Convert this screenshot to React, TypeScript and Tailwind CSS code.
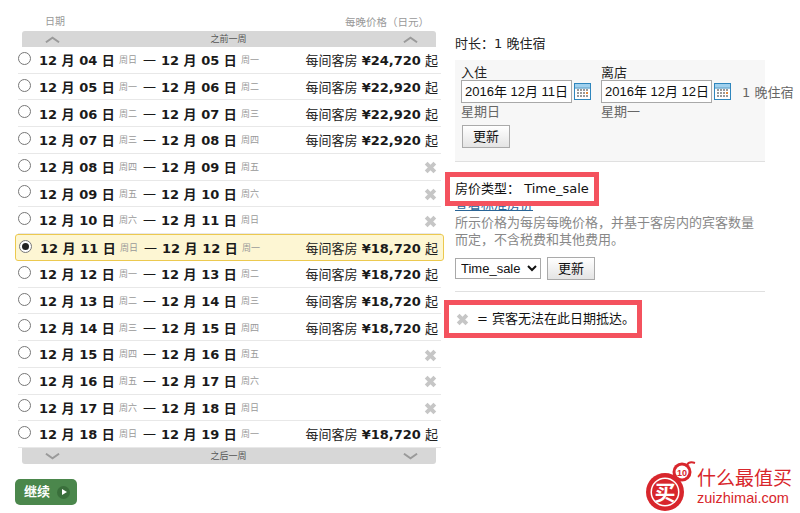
const sans = "font-['DejaVu_Sans','Noto_Sans_CJK_SC',sans-serif]";
const field = "font-['Liberation_Sans','Noto_Sans_CJK_SC',sans-serif]";

type Row = { from: string; fromDay: string; to: string; toDay: string; price?: string; selected?: boolean };

const rows: Row[] = [
  { from: "04", fromDay: "周日", to: "05", toDay: "周一", price: "24,720" },
  { from: "05", fromDay: "周一", to: "06", toDay: "周二", price: "22,920" },
  { from: "06", fromDay: "周二", to: "07", toDay: "周三", price: "22,920" },
  { from: "07", fromDay: "周三", to: "08", toDay: "周四", price: "22,920" },
  { from: "08", fromDay: "周四", to: "09", toDay: "周五" },
  { from: "09", fromDay: "周五", to: "10", toDay: "周六" },
  { from: "10", fromDay: "周六", to: "11", toDay: "周日" },
  { from: "11", fromDay: "周日", to: "12", toDay: "周一", price: "18,720", selected: true },
  { from: "12", fromDay: "周一", to: "13", toDay: "周二", price: "18,720" },
  { from: "13", fromDay: "周二", to: "14", toDay: "周三", price: "18,720" },
  { from: "14", fromDay: "周三", to: "15", toDay: "周四", price: "18,720" },
  { from: "15", fromDay: "周四", to: "16", toDay: "周五" },
  { from: "16", fromDay: "周五", to: "17", toDay: "周六" },
  { from: "17", fromDay: "周六", to: "18", toDay: "周日" },
  { from: "18", fromDay: "周日", to: "19", toDay: "周一", price: "18,720" },
];

function Cross({ className }: { className?: string }) {
  return (
    <svg viewBox="0 0 12 12" className={className}>
      <path d="M2 2 L10 10 M10 2 L2 10" stroke="#c6c6c6" strokeWidth="3.6" strokeLinecap="butt" fill="none" />
    </svg>
  );
}

function Chevron({ up }: { up?: boolean }) {
  return (
    <svg viewBox="0 0 16 7" className="w-[15px] h-[7px]">
      <path d={up ? "M1 6.5 L8 1.5 L15 6.5" : "M1 0.5 L8 5.5 L15 0.5"} stroke="#9a9a9a" strokeWidth="2" fill="none" />
    </svg>
  );
}

function WeekBar({ label, up }: { label: string; up?: boolean }) {
  return (
    <div className={`ml-[7px] w-[414px] h-4 bg-[#d7d7d7] flex items-center justify-between pl-[23px] pr-[18px] ${up ? "rounded-t-[3px]" : "rounded-b-[3px]"}`}>
      <Chevron up={up} />
      <span className="text-[9px] text-[#555] leading-none -ml-[6px]">{label}</span>
      <Chevron up={up} />
    </div>
  );
}

function DateRow({ row }: { row: Row }) {
  const box = row.selected
    ? "w-[429px] h-[27px] -ml-[3px] pl-[3px] pr-[5px] bg-[#fdf6d3] border border-[#ecc94f] rounded-[3px]"
    : "w-[423px] h-[26.72px] pr-[3px] border-b border-[#e8e8e8]";
  return (
    <div className={`flex items-center ${box}`}>
      <span className="w-[13px] h-[13px] rounded-full border border-[#777] bg-white flex items-center justify-center -mt-[3px] shrink-0">
        {row.selected && <span className="w-[7px] h-[7px] rounded-full bg-[#222]" />}
      </span>
      <span className="ml-2 pt-[2px] w-[254px] flex items-center whitespace-nowrap text-[13px] font-bold text-[#1a1a1a]">
        <span className="w-[80px]">12 月 {row.from} 日</span>
        <span className="w-[24px] text-[9px] font-normal text-[#999]">{row.fromDay}</span>
        <span className="w-[18px] font-normal">一</span>
        <span className="w-[80px]">12 月 {row.to} 日</span>
        <span className="w-[24px] text-[9px] font-normal text-[#999]">{row.toDay}</span>
      </span>
      <span className="ml-auto pt-[2px] whitespace-nowrap text-[13px] text-[#222]">
        {row.price ? (
          <>
            每间客房 <b className="text-[#1a1a1a]">¥{row.price}</b> 起
          </>
        ) : (
          <Cross className="w-[13px] h-[13px] mr-[1px]" />
        )}
      </span>
    </div>
  );
}

function CalendarIcon() {
  return (
    <svg viewBox="0 0 17 17" className="w-[17px] h-[17px] shrink-0">
      <rect x="0.5" y="0.5" width="16" height="16" fill="#fff" stroke="#2f86bd" />
      <rect x="1" y="1" width="15" height="3.5" fill="#9fd0ee" />
      <path d="M1 5 H16" stroke="#2f86bd" />
      {[4, 7, 10, 13].map((x) =>
        [7, 10, 13].map((y) => (
          <rect key={`${x}-${y}`} x={x - 1} y={y - 1} width="2" height="2" fill={x === 13 && y === 10 ? "#e08a3c" : "#999"} />
        ))
      )}
    </svg>
  );
}

function DateField({ label, value, day }: { label: string; value: string; day: string }) {
  return (
    <div className="w-[140px] shrink-0">
      <div className="h-[19px] text-[13px] leading-[23px] text-[#222]">{label}</div>
      <div className="flex items-center gap-[2px]">
        <div className={`w-[111px] h-[23px] border border-[#a9a9a9] bg-white pl-[3px] text-[13px] leading-[21px] text-[#111] whitespace-nowrap ${field}`}>{value}</div>
        <CalendarIcon />
      </div>
      <div className="text-[13px] leading-[18px] text-[#666]">{day}</div>
    </div>
  );
}

function UpdateButton({ className }: { className?: string }) {
  return (
    <button className={`w-12 h-[23px] border border-[#aaa] bg-gradient-to-b from-white to-[#e4e4e4] text-[13px] text-[#111] ${className ?? ""}`}>更新</button>
  );
}

function Logo() {
  return (
    <div className="flex items-start">
      <svg viewBox="0 0 52 53" className="w-[52px] h-[53px] shrink-0">
        <circle cx="20" cy="32" r="19" fill="#d8262c" />
        <circle cx="37" cy="12" r="9.5" fill="#d8262c" />
        <path d="M26 20 L34 16 L32 26 Z" fill="#d8262c" />
        <path d="M42 5 Q44 1 50 3" stroke="#d8262c" strokeWidth="2" fill="none" />
        <circle cx="20" cy="32" r="14.5" fill="#fff" />
        <circle cx="20" cy="32" r="13" fill="#d8262c" />
        <circle cx="37" cy="12" r="6.5" fill="#fff" />
        <text x="37" y="15.5" textAnchor="middle" fontSize="9" fontWeight="700" fill="#d8262c" fontFamily="Liberation Sans">10</text>
        <text x="20" y="40" textAnchor="middle" fontSize="21" fontWeight="700" fill="#fff" fontFamily="Noto Sans CJK SC">买</text>
      </svg>
      <div className="mt-[7px] text-[#d8262c]">
        <div className="text-[19px] leading-[22px] whitespace-nowrap">什么最值买</div>
        <div className={`text-[14.5px] leading-[18px] whitespace-nowrap ${field}`}>zuizhimai.com</div>
      </div>
    </div>
  );
}

export default function App() {
  return (
    <div className={`relative w-[800px] h-[513px] bg-white overflow-hidden flex ${sans}`}>
      {/* 日期列表 */}
      <div className="w-[455px] pl-[15px] pt-[15px] shrink-0">
        <div className="flex justify-between h-4 pl-[30px] pr-[26px] text-[10px] leading-[14px] text-[#999]">
          <span>日期</span>
          <span className="text-[10.5px]">每晚价格（日元）</span>
        </div>
        <WeekBar label="之前一周" up />
        <div className="ml-[3px]">
          {rows.map((row) => (
            <DateRow key={row.from} row={row} />
          ))}
        </div>
        <WeekBar label="之后一周" />
        <button className="mt-[15px] w-[62px] h-[26px] rounded-[5px] bg-[#4b874c] flex items-center pl-[9px] gap-[7px] text-white text-[13px] font-bold">
          继续
          <span className="w-[13px] h-[13px] rounded-full bg-[#3a6f3b] flex items-center justify-center">
            <span className="border-l-[5px] border-l-white border-y-[3.5px] border-y-transparent ml-[1px]" />
          </span>
        </button>
      </div>

      {/* 右侧 */}
      <div className="w-[345px] pt-[35px] text-[13px]">
        <div className="h-[25px] leading-[18px] text-[#222]">时长：1 晚住宿</div>
        <div className="w-[310px] h-[102px] bg-[#f7f7f7] border-b border-[#e0e0e0] pl-[6px] pt-[1px]">
          <div className="flex whitespace-nowrap">
            <DateField label="入住" value="2016年 12月 11日" day="星期日" />
            <DateField label="离店" value="2016年 12月 12日" day="星期一" />
            <span className="ml-[1px] mt-[22px] text-[#666]">1 晚住宿</span>
          </div>
          <UpdateButton className="mt-[4px] ml-[1px]" />
        </div>

        <div className="relative z-10 mt-[10px] -ml-[10px] w-[154px] h-[34px] border-[5px] border-[#f4525e] bg-white pl-[5px] leading-[23px] text-[#111] whitespace-nowrap">
          房价类型： Time_sale
        </div>
        <a className="block -mt-[9px] leading-[16px] text-[#2a6496] underline">查看标准房价</a>
        <p className="mt-[1px] w-[302px] leading-[17px] text-[#888]">所示价格为每房每晚价格，并基于客房内的宾客数量而定，不含税费和其他费用。</p>
        <div className="mt-[9px] flex items-center gap-[6px]">
          <select className={`w-[86px] h-[21px] border border-[#a9a9a9] bg-white pl-[1px] text-[13px] text-[#111] ${field}`} defaultValue="Time_sale">
            <option>Time_sale</option>
          </select>
          <UpdateButton />
        </div>
        <div className="mt-[11px] w-[310px] border-b border-[#e0e0e0]" />
        <div className="mt-[8px] -ml-[11px] w-[198px] h-[38px] border-[5px] border-[#f4525e] bg-white flex items-center pl-[7px] gap-[8px] text-[#111] whitespace-nowrap">
          <Cross className="w-[13px] h-[13px] shrink-0" />
          = 宾客无法在此日期抵达。
        </div>
      </div>

      <div className="absolute left-[645px] top-[460px]">
        <Logo />
      </div>
    </div>
  );
}
